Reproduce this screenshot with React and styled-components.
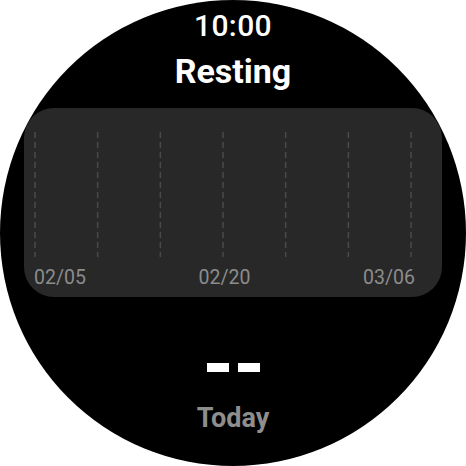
import styled, { createGlobalStyle } from "styled-components";

const GlobalStyle = createGlobalStyle`
  html, body {
    margin: 0;
    padding: 0;
    background: #ffffff;
  }
  body {
    font-family: Roboto, "Noto Sans", "Liberation Sans", sans-serif;
  }
`;

const Watch = styled.div`
  width: 466px;
  height: 466px;
  border-radius: 50%;
  background: #000000;
  overflow: hidden;
  display: flex;
  flex-direction: column;
  align-items: center;
  box-sizing: border-box;
  padding-top: 11px;
`;

const Time = styled.div`
  color: #ffffff;
  font-size: 30px;
  font-weight: 500;
  line-height: 30px;
  letter-spacing: 0.4px;
`;

const Title = styled.div`
  margin-top: 10px;
  color: #ffffff;
  font-size: 34px;
  font-weight: 700;
  line-height: 40px;
`;

const Card = styled.div`
  margin-top: 17px;
  width: 418px;
  height: 189px;
  border-radius: 30px;
  background: #282828;
  box-sizing: border-box;
  padding: 24px 30px 0 10px;
  display: flex;
  flex-direction: column;
`;

const Chart = styled.svg`
  display: block;
  width: 378px;
  height: 125px;
`;

const Labels = styled.div`
  margin-top: 10px;
  width: 381px;
  display: flex;
  justify-content: space-between;
`;

const Label = styled.span`
  color: #8c8c8c;
  font-size: 19.5px;
  line-height: 22px;
`;

const Value = styled.div`
  margin-top: 66px;
  display: flex;
  gap: 9px;
`;

const Dash = styled.div`
  width: 22px;
  height: 9px;
  background: #ffffff;
`;

const Period = styled.div`
  margin-top: 31px;
  color: #8e8e8e;
  font-size: 27px;
  font-weight: 700;
  line-height: 30px;
`;

const gridLines = [0, 1, 2, 3, 4, 5, 6];

const App = () => {
  return (
    <>
      <GlobalStyle />
      <Watch>
        <Time>10:00</Time>
        <Title>Resting</Title>
        <Card>
          <Chart viewBox="0 0 378 125">
            {gridLines.map((i) => {
              const x = 1 + i * 62.67;
              return (
                <line
                  key={i}
                  x1={x}
                  x2={x}
                  y1={0}
                  y2={125}
                  stroke="#4a4a4a"
                  strokeWidth={1.5}
                  strokeDasharray="6 4"
                />
              );
            })}
          </Chart>
          <Labels>
            <Label>02/05</Label>
            <Label>02/20</Label>
            <Label>03/06</Label>
          </Labels>
        </Card>
        <Value>
          <Dash />
          <Dash />
        </Value>
        <Period>Today</Period>
      </Watch>
    </>
  );
};

export default App;
